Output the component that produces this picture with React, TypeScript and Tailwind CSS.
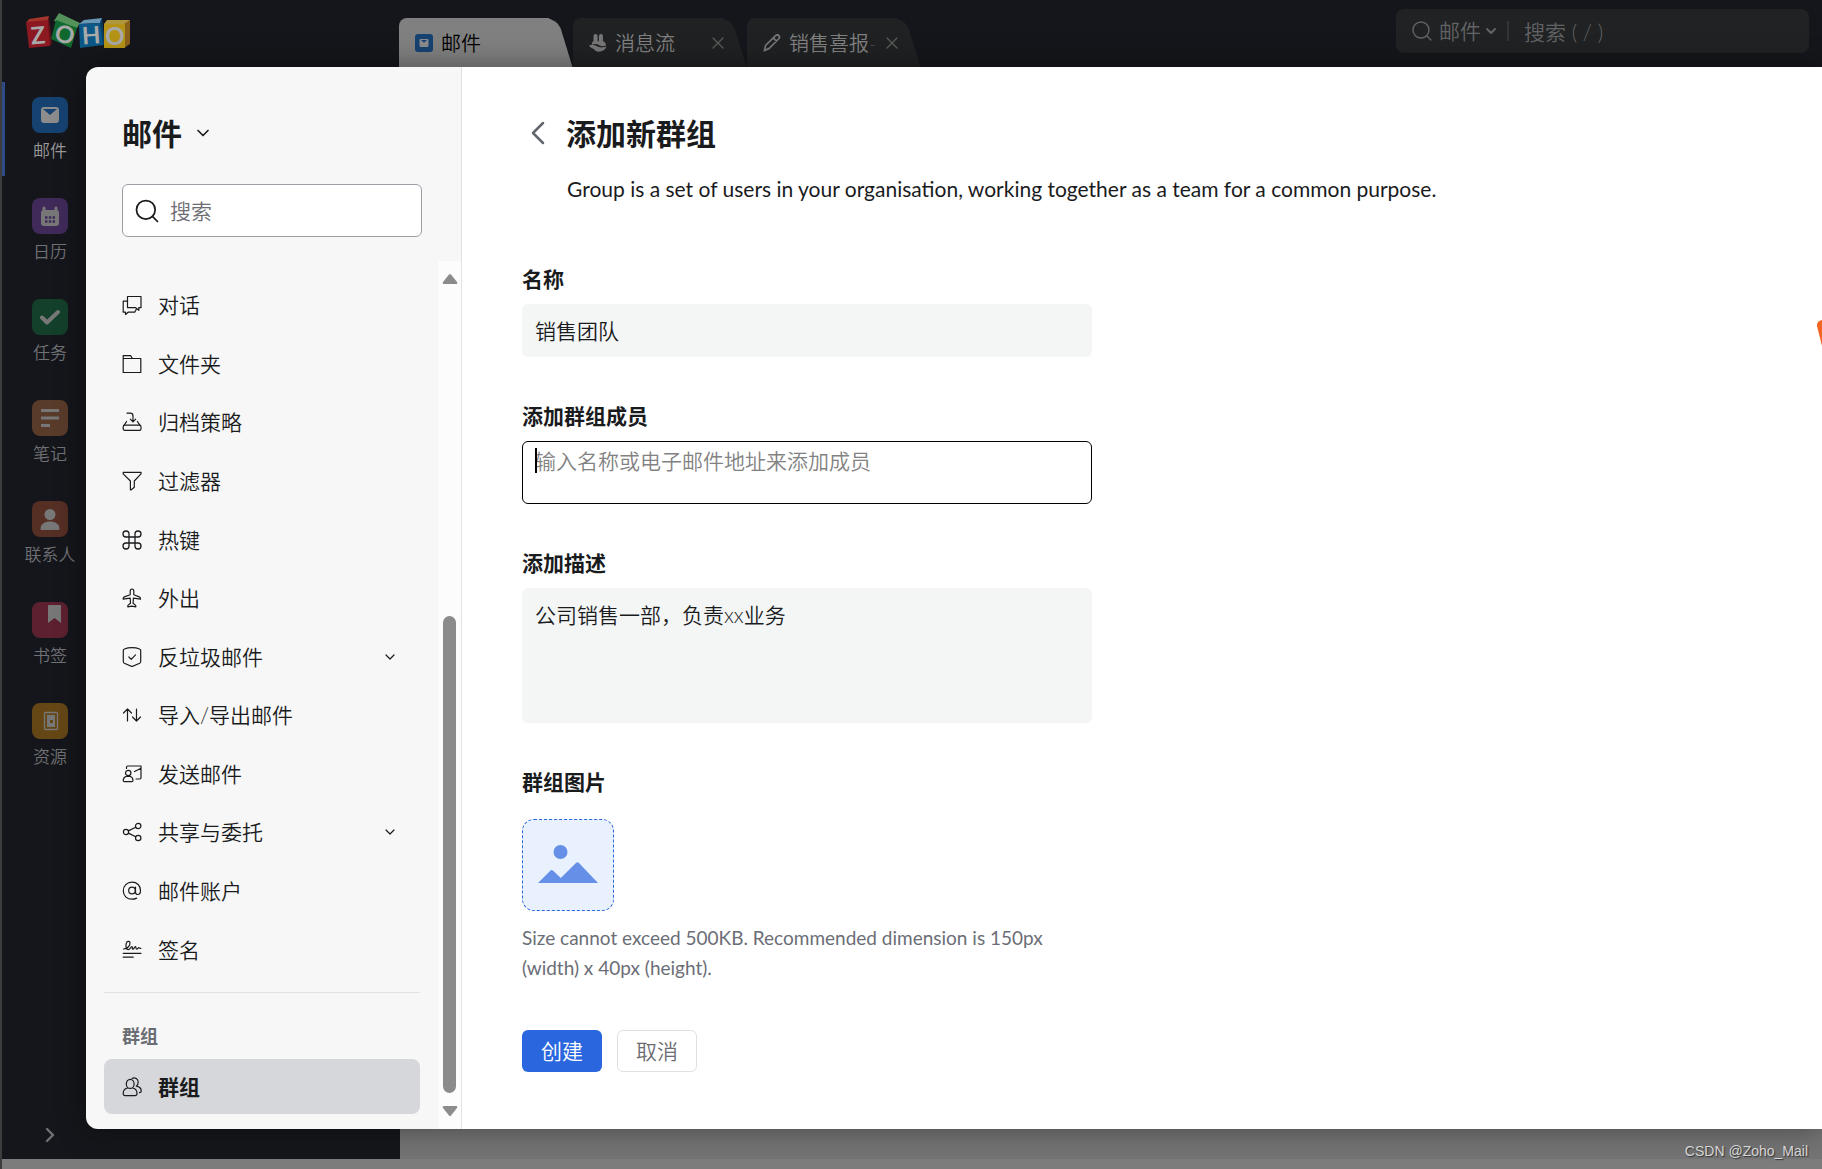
import type { ReactNode } from 'react';
import { ChevronDown, ChevronLeft, ChevronRight, Command, Search, X } from 'lucide-react';

interface NavItem {
  label: string;
  icon: ReactNode;
  expandable?: boolean;
}

interface AppItem {
  label: string;
  color: string;
  icon: ReactNode;
  active?: boolean;
}

function LineIcon({ children }: { children: ReactNode }) {
  return (
    <svg
      viewBox="0 0 20 20"
      className="w-5 h-5 shrink-0"
      fill="none"
      stroke="currentColor"
      strokeWidth="1.2"
      strokeLinecap="round"
      strokeLinejoin="round"
      aria-hidden="true"
    >
      {children}
    </svg>
  );
}

const navItems: NavItem[] = [
  {
    label: '对话',
    icon: (
      <LineIcon>
        <path d="M5.5 1.5H19v11.2h-2.2v2.6l-3.2-2.6H5.5z" />
        <path d="M5.5 6.2H1.2v11h2.3v2.3l2.6-2.3h6.6l1.6-3" />
      </LineIcon>
    ),
  },
  {
    label: '文件夹',
    icon: (
      <LineIcon>
        <path d="M1.2 18.5V1.6h7.4l1.9 2.9h8.3v14zM1.2 4.5h9.3" />
      </LineIcon>
    ),
  },
  {
    label: '归档策略',
    icon: (
      <LineIcon>
        <path d="M5 1.2h3.2c1.8 0 2.8 1 2.8 2.8v5.6M8.3 7.2l2.7 2.7 2.7-2.7" />
        <path d="M4.6 9.5 2 13.4M15.4 9.5l2.6 3.9" />
        <rect x="1.2" y="13.2" width="17.8" height="5.2" rx="1.6" />
      </LineIcon>
    ),
  },
  {
    label: '过滤器',
    icon: (
      <LineIcon>
        <path d="M1.2 1.4h17.8v1.5L12.3 10v6.3l-3 2.5h-.9V10L1.2 2.9z" />
      </LineIcon>
    ),
  },
  { label: '热键', icon: <Command className="w-5 h-5 shrink-0" strokeWidth={1.3} viewBox="2 2 20 20" /> },
  {
    label: '外出',
    icon: (
      <LineIcon>
        <path d="M10 1c-1.2 0-1.8 1-1.8 2.2v3.6L2.4 8.9c-.9.4-1.3 1-1.3 2.2l7.1-.9.3 5-2.3 1.9c-.6.6-.5 1.4-.4 1.8l4-.8 4 .8c.1-.4.2-1.2-.4-1.8l-2.3-1.9.3-5 7.1.9c0-1.2-.4-1.8-1.3-2.2l-5.4-2.1V3.2C11.800 2 11.200 1 10 1z" />
      </LineIcon>
    ),
  },
  {
    label: '反垃圾邮件',
    expandable: true,
    icon: (
      <LineIcon>
        <path d="M10 .6c2.500 0 5.500.5 7.500 1.400.8.300 1.200.8 1.200 1.600v11c0 .8-.4 1.300-1 1.600L10 19.600l-7.700-3.400c-.6-.3-1-.8-1-1.600v-11c0-.8.4-1.300 1.200-1.600C4.500 1.100 7.500.6 10 .6z" />
        <path d="m6.900 10 2.300 2.300 4.300-4.400" />
      </LineIcon>
    ),
  },
  {
    label: '导入/导出邮件',
    icon: (
      <LineIcon>
        <path d="M5.500 16V4.200M1.500 8l4-4 4 4M14.500 4v11.800M10.500 12l4 4 4-4" />
      </LineIcon>
    ),
  },
  {
    label: '发送邮件',
    icon: (
      <LineIcon>
        <path d="M4.500 4.500V3.200c0-.8.400-1.200 1.200-1.200H19v11.800c0 .8-.4 1.200-1.200 1.200H14M19 4.300l-6.500 3.200" />
        <circle cx="6.200" cy="9" r="2.700" />
        <path d="M1.200 16.500c0-2.200 1.500-3.600 3.200-4.200h3.600c1.700.6 3 2 3 4.200 0 .8-.4 1.200-1.200 1.200H2.400c-.8 0-1.200-.4-1.200-1.200z" />
      </LineIcon>
    ),
  },
  {
    label: '共享与委托',
    expandable: true,
    icon: (
      <LineIcon>
        <circle cx="4" cy="10" r="2.600" />
        <circle cx="16.200" cy="4" r="2.700" />
        <circle cx="16.200" cy="16" r="2.700" />
        <path d="m6.400 8.900 7.300-3.700M6.400 11.100l7.300 3.700" />
      </LineIcon>
    ),
  },
  {
    label: '邮件账户',
    icon: (
      <LineIcon>
        <circle cx="10" cy="9.500" r="3.300" />
        <path d="M13.500 6v5.300c0 1.500.9 2.200 2.200 2.200 1.800 0 2.800-1.600 2.800-4C18.500 4.600 15 1.200 10 1.200S1.300 4.700 1.300 9.700s3.500 8.500 8.700 8.500c1.800 0 3.300-.4 4.600-1.100" />
      </LineIcon>
    ),
  },
  {
    label: '签名',
    icon: (
      <LineIcon>
        <path d="M1.500 9c4.200-.4 7-3.400 6.400-6.400C7.500.6 4.800.9 4.200 3.600c-.7 3 .1 6 2.200 6 1.600 0 2.400-3 3.500-3.100.9 0-.1 2.700 1 2.700s1.700-2.500 2.600-2.500c.8 0 .1 2.500 1.200 2.500s1.300-1.500 2-1.500c.6 0 .8.800 2.200.6M1.200 13.300h17.800M1.200 17.200h10" />
      </LineIcon>
    ),
  },
];

const groupIcon = (
  <LineIcon>
    <ellipse cx="8.200" cy="6.900" rx="3.900" ry="4.500" />
    <path d="M5.500 11c-2.700.6-4.300 2.600-4.300 5.500 0 1.400.7 2.200 2 2.200h9.800c1.300 0 2-.8 2-2.200 0-2.900-1.600-4.900-4.200-5.500" />
    <path d="M10.200 1.400c2.900-1.300 6 .5 6 3.900 0 1.700-.7 3.100-1.900 3.900 3.100.5 4.900 2.300 4.900 4.800 0 1-.7 1.700-1.700 1.700" />
  </LineIcon>
);

const apps: AppItem[] = [
  {
    label: '邮件',
    color: 'bg-[#164272]',
    active: true,
    icon: (
      <>
        <rect x="9" y="10" width="18" height="16" rx="3" fill="#8c8c8c" />
        <path d="M11 12h14l-7 6z" fill="#164272" />
      </>
    ),
  },
  {
    label: '日历',
    color: 'bg-[#3f2a5a]',
    icon: (
      <>
        <path d="M12 10v4M24 10v4" stroke="#777" strokeWidth="3" strokeLinecap="round" />
        <rect x="9" y="12" width="18" height="16" rx="3" fill="#777" />
        <path d="M13 19.500h10M13 23.500h10" stroke="#3f2a5a" strokeWidth="2.500" strokeDasharray="2.500 1.300" />
      </>
    ),
  },
  {
    label: '任务',
    color: 'bg-[#13402b]',
    icon: (
      <path
        d="m10 18.500 5 5L26 13"
        fill="none"
        stroke="#777"
        strokeWidth="4"
        strokeLinecap="round"
        strokeLinejoin="round"
      />
    ),
  },
  {
    label: '笔记',
    color: 'bg-[#593b2a]',
    icon: <path d="M9 10.500h18M9 18h18M9 25.500h9" stroke="#777" strokeWidth="3" />,
  },
  {
    label: '联系人',
    color: 'bg-[#552e24]',
    icon: (
      <>
        <circle cx="18" cy="13.500" r="5.500" fill="#777" />
        <path d="M8.500 28c0-5 4-7.500 9.500-7.500s9.500 2.500 9.500 7.500q0 1-1 1h-17q-1 0-1-1z" fill="#777" />
      </>
    ),
  },
  {
    label: '书签',
    color: 'bg-[#5d2030]',
    icon: <path d="M16 4q0-1 1-1h11q1 0 1 1v17l-6.500-5-6.500 5z" fill="#777" />,
  },
  {
    label: '资源',
    color: 'bg-[#654716]',
    icon: (
      <>
        <rect x="12.500" y="9.500" width="13" height="17" rx="1" fill="none" stroke="#777" strokeWidth="1.300" />
        <rect x="15" y="12" width="8" height="12" fill="#777" />
        <rect x="18" y="17" width="3" height="3" fill="#654716" />
      </>
    ),
  },
];

function Logo() {
  return (
    <svg
      viewBox="0 0 104 36"
      className="w-[104px] h-9"
      fontFamily="Lato, sans-serif"
      fontWeight="700"
      fontSize="24"
      textAnchor="middle"
      role="img"
      aria-label="Zoho"
    >
      <path d="M0 10 3 6l20-3-1 6z" fill="#a3352b" />
      <path d="m22 8 1-5 3 28-3 2z" fill="#5e1416" />
      <path d="M0 9l22-2 2 26-21 2z" fill="#8c1822" />
      <path d="m28 8 5-8 21 10-3 5z" fill="#53935b" />
      <path d="m30 7 21 8-6 20-20-9z" fill="#0f692f" />
      <path d="m53 11 5-4 18-2-1 5z" fill="#6997b8" />
      <path d="m74 9 2-4 3 26-3 2z" fill="#0a3f63" />
      <path d="m53 11 21-1 3 22-23 3z" fill="#0c5888" />
      <path d="m78 11 3-4h23l-4 4z" fill="#b0963c" />
      <path d="m98 11 6-4v24l-6 4z" fill="#8a611a" />
      <path d="M78 11h21v24H78z" fill="#b59316" />
      <g fill="#a9a9a9">
        <text x="12" y="31" transform="rotate(-5 12 22)">Z</text>
        <text x="39" y="30" transform="rotate(15 39 21)">O</text>
        <text x="65" y="31" transform="rotate(-4 65 22)">H</text>
        <text x="89" y="32">O</text>
      </g>
    </svg>
  );
}

function Tab({ icon, label, active, fade }: { icon: ReactNode; label: string; active?: boolean; fade?: boolean }) {
  return (
    <div
      className={
        active
          ? 'relative isolate flex items-center w-[174px] h-[49px] pl-4 text-black before:absolute before:-z-10 before:inset-y-0 before:left-0 before:right-6 before:rounded-tl-lg before:bg-[#808080] after:absolute after:-z-10 after:inset-y-0 after:left-1/2 after:right-2 after:skew-x-[17deg] after:rounded-tr-xl after:bg-[#808080]'
          : 'relative isolate flex items-center w-[174px] h-[49px] pl-4 text-[#808080] before:absolute before:-z-10 before:inset-y-0 before:left-0 before:right-6 before:rounded-tl-lg before:bg-[#1f2122] after:absolute after:-z-10 after:inset-y-0 after:left-1/2 after:right-2 after:skew-x-[17deg] after:rounded-tr-xl after:bg-[#1f2122]'
      }
    >
      <button type="button" className="flex items-center gap-2 h-full text-[20px] leading-7 whitespace-nowrap">
        {icon}
        <span>
          {label}
          {fade && <span className="text-[#4a4b4c]">-</span>}
        </span>
      </button>
      {!active && (
        <button type="button" aria-label={`关闭${label}`} className="ml-auto mr-[19px] text-[#5c5c5c]">
          <X className="w-5 h-5" strokeWidth={1.5} />
        </button>
      )}
    </div>
  );
}

function TopBar() {
  return (
    <header className="flex items-end h-[67px] shrink-0">
      <a href="#home" className="self-start w-[397px] pl-6 pt-[13px]">
        <Logo />
      </a>
      <div className="flex">
        <Tab
          active
          label="邮件"
          icon={
            <svg viewBox="0 0 18 18" className="w-[18px] h-[18px]" aria-hidden="true">
              <rect width="18" height="18" rx="3" fill="#164272" />
              <rect x="4.500" y="5" width="9" height="8" rx="1" fill="#8c8c8c" />
              <path d="M6 6h6L9 8.700z" fill="#164272" />
            </svg>
          }
        />
        <Tab
          label="消息流"
          icon={
            <svg viewBox="0 0 20 20" className="w-[18px] h-[18px]" fill="#777" aria-hidden="true">
              <rect x="5" y="0" width="4.500" height="10" rx="2.200" />
              <rect x="11" y="0" width="4.500" height="10" rx="2.200" />
              <path d="M4.500 8h11.500c1.500 1 3 2.500 3 4.500-3 2-5.500 1-8-.3-2.300-1.200-5-1.500-8 0C3 10.500 3.500 9 4.500 8z" />
              <path d="M0 12.800c3-1 6.500-.6 9 .9s7 2 10.500 0c-1 3.800-4.500 6-8.500 6-3 0-4.500-1-5.500-3-2-.5-4.500-1.700-5.500-3.900z" />
            </svg>
          }
        />
        <Tab
          fade
          label="销售喜报"
          icon={
            <svg
              viewBox="0 0 20 20"
              className="w-[18px] h-[18px]"
              fill="none"
              stroke="#777"
              strokeWidth="1.900"
              strokeLinejoin="round"
              aria-hidden="true"
            >
              <path d="m1.500 18.500 1.500-6L14 1.800c1.200-1 2.700-1 3.600 0s.9 2.400-.1 3.500L7 16zM11.500 4.500l3.800 3.600" />
            </svg>
          }
        />
      </div>
      <div className="flex items-center self-start w-[413px] h-11 mt-[9px] ml-auto mr-[13px] pl-[14px] rounded-lg bg-[#202223] text-[21px] text-[#626365]">
        <Search className="w-6 h-6 shrink-0" strokeWidth={1.4} />
        <button type="button" className="flex items-center gap-0.5 ml-[5px] whitespace-nowrap">
          邮件
          <ChevronDown className="w-4 h-4" strokeWidth={3} />
        </button>
        <span className="w-0.5 h-5 ml-2 bg-[#333436]" />
        <input
          type="text"
          aria-label="搜索邮件"
          placeholder="搜索 ( / )"
          className="flex-1 min-w-0 h-full ml-[15px] bg-transparent outline-none placeholder:text-[#626365]"
        />
      </div>
    </header>
  );
}

function AppRail() {
  return (
    <nav className="flex flex-col w-[84px] shrink-0 pt-[15px] pb-3">
      {apps.map((app) => (
        <a
          key={app.label}
          href={`#${app.label}`}
          className={
            app.active
              ? 'flex flex-col items-center h-[94px] mb-[7px] pt-[15px] pl-[9px] border-l-3 border-[#2f4b88] text-[#999]'
              : 'flex flex-col items-center h-[94px] mb-[7px] pt-[15px] pl-[9px] border-l-3 border-transparent text-[#707174]'
          }
        >
          <span className={`w-9 h-9 rounded-lg ${app.color}`}>
            <svg viewBox="0 0 36 36" className="w-9 h-9" aria-hidden="true">
              {app.icon}
            </svg>
          </span>
          <span className="mt-[6px] text-[17px] leading-6 whitespace-nowrap">{app.label}</span>
        </a>
      ))}
      <button type="button" aria-label="展开" className="self-center mt-auto pl-3 text-[#707174]">
        <ChevronRight className="w-6 h-6" strokeWidth={2.4} />
      </button>
    </nav>
  );
}

function SettingsSidebar() {
  return (
    <aside className="flex flex-col w-[376px] shrink-0 border-r border-[#e2e2e4] bg-[#f7f7f7] text-[#1a1b1d]">
      <div className="h-[194px] pl-9 pr-[39px] pt-[46px]">
        <button type="button" className="flex items-center gap-[11px] text-[30px] leading-10 font-bold">
          邮件
          <ChevronDown className="w-5 h-5" strokeWidth={2} />
        </button>
        <label className="flex items-center gap-[9px] h-[53px] mt-[31px] px-[10px] rounded-md border border-[#9c9ea6] bg-white">
          <Search className="w-7 h-7 shrink-0" strokeWidth={1.5} />
          <input
            type="text"
            aria-label="搜索"
            placeholder="搜索"
            className="flex-1 min-w-0 text-[21px] outline-none placeholder:text-[#6c6d72]"
          />
        </label>
      </div>

      <div className="flex flex-1">
        <nav className="flex flex-col flex-1 px-[18px] py-[15px] text-[21px] leading-7">
          <ul className="flex flex-col flex-1">
            {navItems.map((item) => (
              <li key={item.label} className="flex flex-1">
                <a href={`#${item.label}`} className="flex items-center flex-1 gap-4 pl-[18px] pr-[22px]">
                  {item.icon}
                  <span>{item.label}</span>
                  {item.expandable && <ChevronDown className="w-4 h-4 ml-auto" strokeWidth={1.8} />}
                </a>
              </li>
            ))}
          </ul>
          <hr className="mt-[13px] border-[#e2e2e4]" />
          <h2 className="mt-[29px] mb-[9px] pl-[18px] text-[18px] leading-7 font-bold text-[#6b6d74]">群组</h2>
          <a
            href="#群组"
            aria-current="page"
            className="flex items-center gap-4 h-[55px] pl-[18px] rounded-lg bg-[#d6d7db] font-bold"
          >
            {groupIcon}
            <span>群组</span>
          </a>
        </nav>

        {/* Scroll track with its arrows */}
        <div className="flex flex-col items-center w-[23px] py-3 bg-[#fcfcfc]" aria-hidden="true">
          <svg viewBox="0 0 16 12" className="w-4 h-3" fill="#8b8b8b">
            <path d="M7 1.500q1-1.200 2 0l6 7.500q.9 2-1 2H2q-1.900 0-1-2z" />
          </svg>
          <span className="flex-[331]" />
          <span className="flex-[478] w-[13px] rounded-full bg-[#8b8b8b]" />
          <span className="h-3" />
          <svg viewBox="0 0 16 12" className="w-4 h-3" fill="#8b8b8b">
            <path d="M7 10.500q1 1.200 2 0l6-7.500q.9-2-1-2H2q-1.900 0-1 2z" />
          </svg>
        </div>
      </div>
    </aside>
  );
}

function GroupForm() {
  return (
    <main className="flex-1 min-w-0 pl-[60px] pt-[46px] bg-white text-[#1a1b1d]">
      <div className="flex items-center">
        <button type="button" aria-label="返回" className="-ml-1 text-[#62666f]">
          <ChevronLeft className="w-10 h-10" strokeWidth={1.5} />
        </button>
        <h1 className="ml-2 text-[30px] leading-10 font-bold">添加新群组</h1>
      </div>
      <p className="mt-[22px] pl-[45px] text-[21px] leading-7 font-normal">
        Group is a set of users in your organisation, working together as a team for a common purpose.
      </p>

      <form className="w-[570px] mt-[62px] text-[21px] leading-7" onSubmit={(e) => e.preventDefault()}>
        <label htmlFor="name" className="block font-bold">
          名称
        </label>
        <input
          id="name"
          type="text"
          defaultValue="销售团队"
          className="block w-full h-[53px] mt-[11px] px-[13px] pb-0.5 rounded-md bg-[#f4f6f6] outline-none"
        />

        <label htmlFor="members" className="block mt-[45px] font-bold">
          添加群组成员
        </label>
        <div className="relative mt-[11px]">
          <textarea
            id="members"
            placeholder="输入名称或电子邮件地址来添加成员"
            className="block w-full h-[63px] px-3 py-[5px] rounded-md border border-black resize-none outline-none placeholder:text-[#828282]"
          />
          <span className="absolute left-[13px] top-[7px] w-0.5 h-[25px] bg-black" />
        </div>

        <label htmlFor="description" className="block mt-[45px] font-bold">
          添加描述
        </label>
        <textarea
          id="description"
          defaultValue="公司销售一部，负责xx业务"
          className="block w-full h-[135px] mt-[11px] px-[13px] py-[13px] rounded-md bg-[#f4f6f6] resize-none outline-none"
        />

        <h2 className="mt-[45px] font-bold">群组图片</h2>
        <button
          type="button"
          aria-label="上传群组图片"
          className="flex items-center justify-center w-[92px] h-[92px] mt-[23px] pb-0.5 rounded-xl border border-dashed border-[#2a66dd] bg-[#e9f1fe]"
        >
          <svg viewBox="0 0 60 38" className="w-[60px] h-[38px]" fill="#6690e8" aria-hidden="true">
            <circle cx="22.500" cy="7" r="7" />
            <path d="M0 38 12.500 25.500q1.200-1 2.400 0L22.800 33 38 18q1.500-1.400 3 0l19 20z" />
          </svg>
        </button>
        <p className="mt-3 text-[19px] leading-[30px] font-normal text-[#6b6e76]">
          Size cannot exceed 500KB. Recommended dimension is 150px (width) x 40px (height).
        </p>

        <div className="flex gap-[15px] mt-[47px]">
          <button type="submit" className="w-20 h-[42px] rounded-md bg-[#2a67df] text-white">
            创建
          </button>
          <button type="button" className="w-20 h-[42px] rounded-md border border-[#dfe0e2] text-[#6b6b70]">
            取消
          </button>
        </div>
      </form>
    </main>
  );
}

export default function App() {
  return (
    <div className="relative flex flex-col min-h-screen overflow-hidden border-l-2 border-[#3d3d3e] bg-[#15161b] font-['Lato','Noto_Sans_CJK_SC',sans-serif] font-[350]">
      <TopBar />
      <div className="flex flex-1">
        <AppRail />
        <div className="flex flex-col flex-1 min-w-0">
          <div className="relative flex flex-1 overflow-hidden rounded-l-xl shadow-[0_0_30px_rgba(0,0,0,0.4)]">
            <SettingsSidebar />
            <GroupForm />
            <svg viewBox="0 0 5 26" className="absolute right-0 top-[253px] w-[5px] h-[26px]" aria-hidden="true">
              <path d="M0 5Q0 1 5 0v26L0 6z" fill="#f26522" />
            </svg>
          </div>
          <div className="h-[30px] ml-[314px] bg-[#747474]" />
        </div>
      </div>
      <footer className="h-[10px] bg-[#7c7c7c]" />
      <p className="absolute right-[14px] bottom-2 font-['Liberation_Sans',sans-serif] font-normal text-[14px] leading-5 text-[#d6d6d6] [text-shadow:1px_1px_1px_#333]">
        CSDN @Zoho_Mail
      </p>
    </div>
  );
}
